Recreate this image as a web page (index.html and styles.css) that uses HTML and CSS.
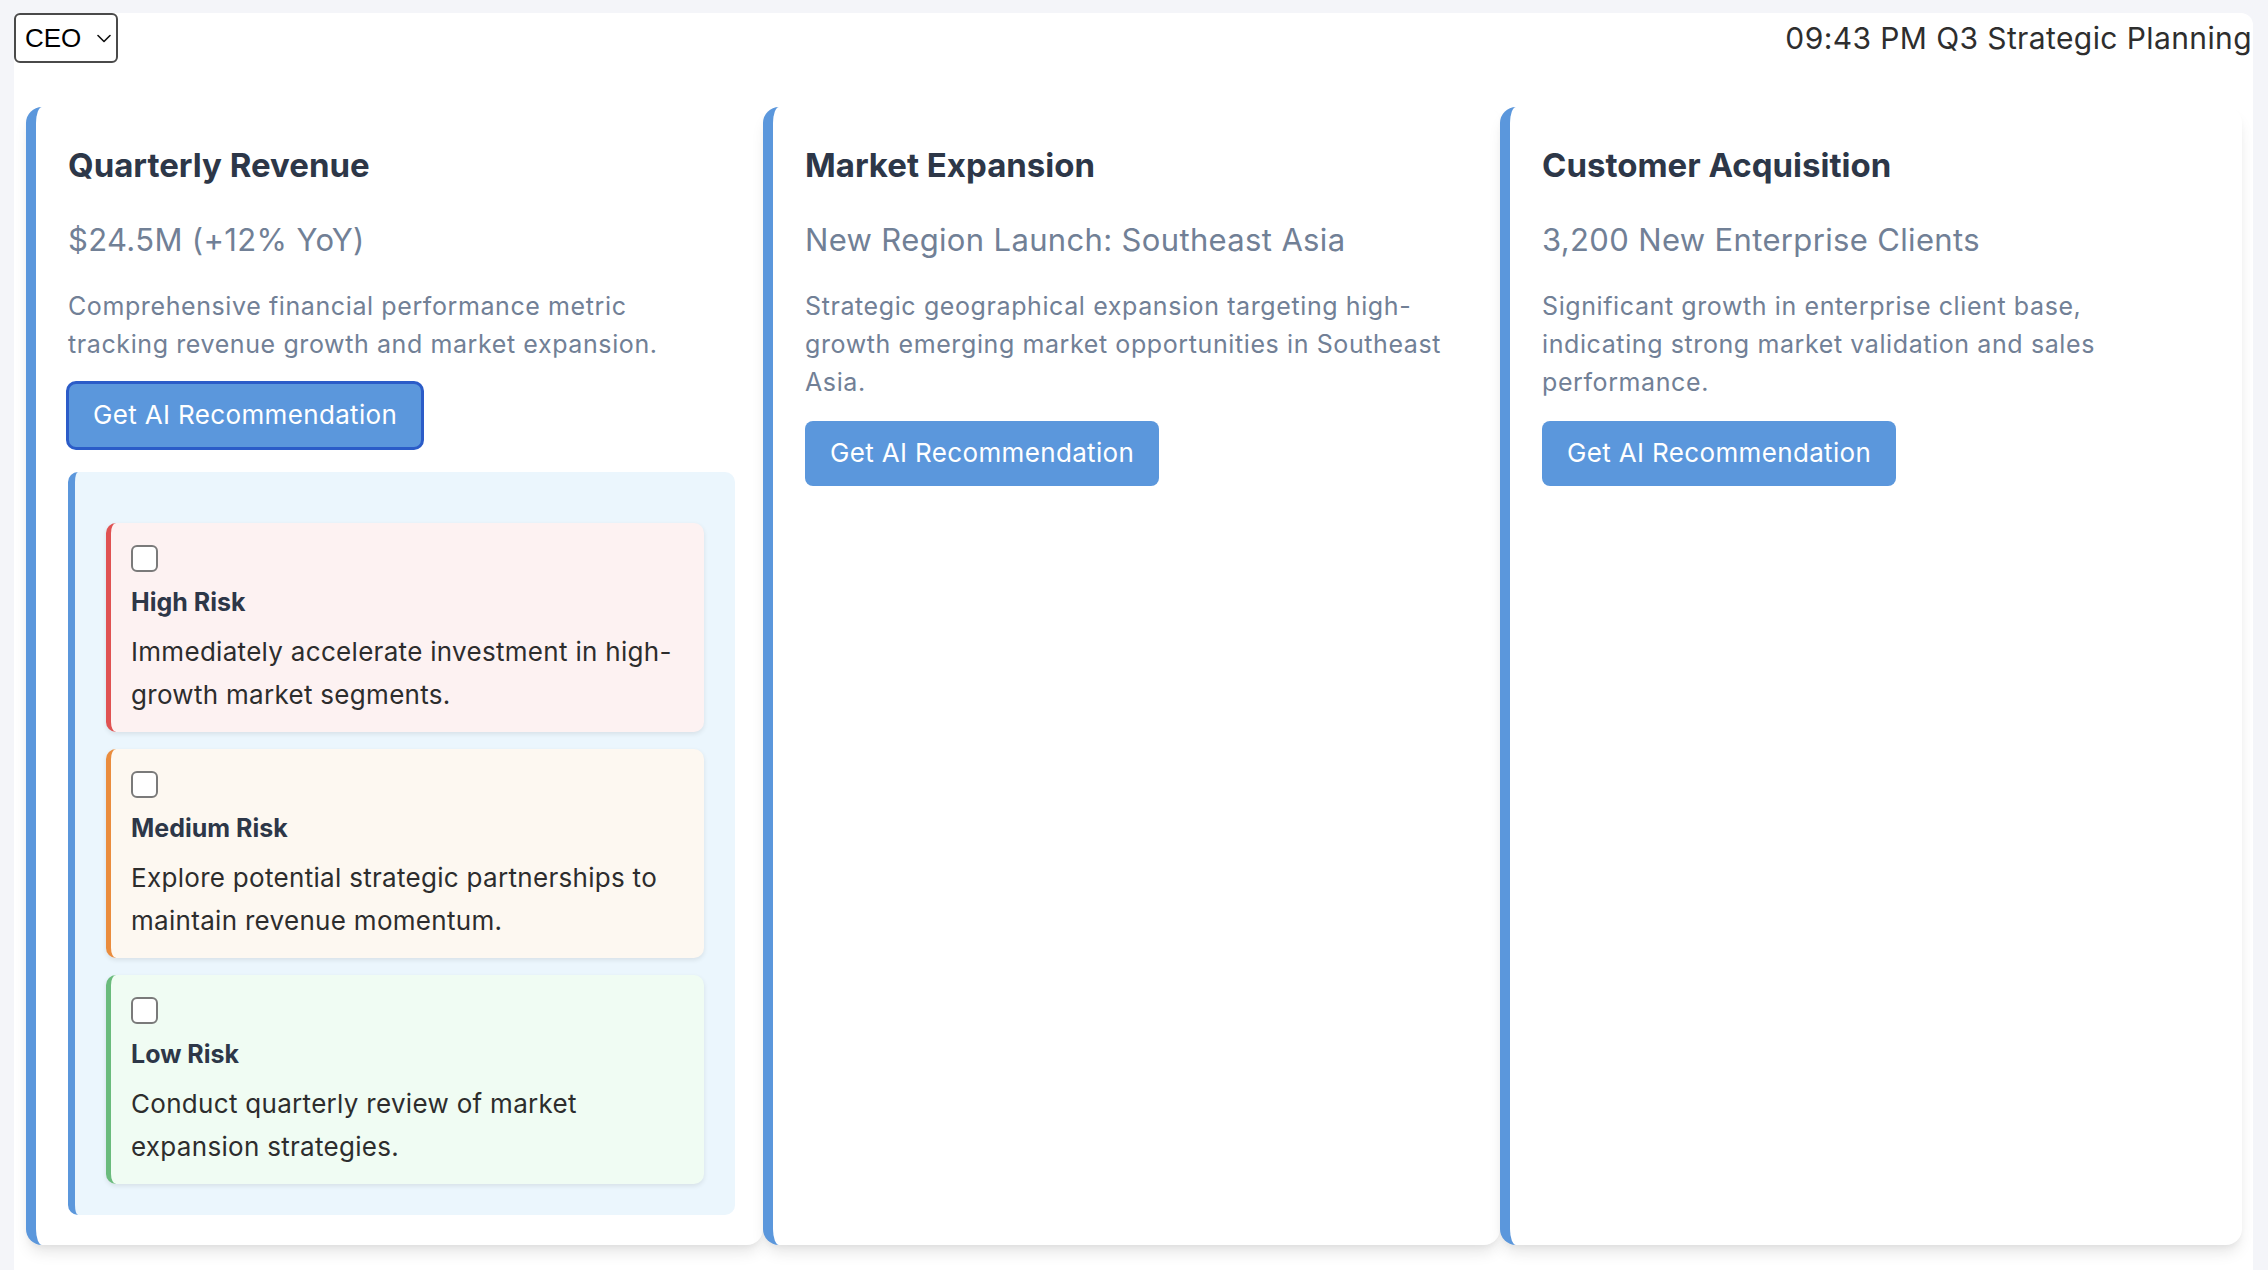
FILE: index.html
```html
<!DOCTYPE html>
<html lang="en">
<head>
<meta charset="utf-8">
<title>Q3 Strategic Planning</title>
<link rel="stylesheet" href="styles.css">
</head>
<body>
<div class="app">
  <header class="topbar">
    <div class="role-select">
      <select class="role">
        <option>CEO</option>
        <option>CFO</option>
        <option>COO</option>
      </select>
      <svg class="chev" width="14" height="9" viewBox="0 0 14 9"><path d="M1 1.5 L7 7.5 L13 1.5" fill="none" stroke="#111" stroke-width="1.6" stroke-linecap="round" stroke-linejoin="round"/></svg>
    </div>
    <div class="meta">09:43 PM Q3 Strategic Planning</div>
  </header>

  <main class="cards">
    <section class="card">
      <h2 class="card-title">Quarterly Revenue</h2>
      <div class="card-value">$24.5M (+12% YoY)</div>
      <p class="card-desc">Comprehensive financial performance metric tracking revenue growth and market expansion.</p>
      <button class="btn btn-focus">Get AI Recommendation</button>
      <div class="recs">
        <div class="rec rec-high">
          <input type="checkbox" class="check">
          <div class="rec-title">High Risk</div>
          <p class="rec-text">Immediately accelerate investment in high-growth market segments.</p>
        </div>
        <div class="rec rec-med">
          <input type="checkbox" class="check">
          <div class="rec-title">Medium Risk</div>
          <p class="rec-text">Explore potential strategic partnerships to maintain revenue momentum.</p>
        </div>
        <div class="rec rec-low">
          <input type="checkbox" class="check">
          <div class="rec-title">Low Risk</div>
          <p class="rec-text">Conduct quarterly review of market expansion strategies.</p>
        </div>
      </div>
    </section>

    <section class="card">
      <h2 class="card-title">Market Expansion</h2>
      <div class="card-value">New Region Launch: Southeast Asia</div>
      <p class="card-desc">Strategic geographical expansion targeting high-growth emerging market opportunities in Southeast Asia.</p>
      <button class="btn">Get AI Recommendation</button>
    </section>

    <section class="card">
      <h2 class="card-title">Customer Acquisition</h2>
      <div class="card-value">3,200 New Enterprise Clients</div>
      <p class="card-desc">Significant growth in enterprise client base, indicating strong market validation and sales performance.</p>
      <button class="btn">Get AI Recommendation</button>
    </section>
  </main>
</div>
</body>
</html>
```
FILE: styles.css
```css
* { box-sizing: border-box; }

html, body {
  margin: 0;
  padding: 0;
}

body {
  background: #f4f5f9;
  font-family: Inter, "Noto Sans", sans-serif;
  color: #2d3748;
  min-height: 1270px;
}

.app {
  margin: 13px 15px 0 14px;
  background: #ffffff;
  border-radius: 12px 12px 0 0;
  min-height: 1300px;
}

.topbar {
  display: flex;
  align-items: center;
  justify-content: space-between;
  height: 50px;
}

.role-select {
  position: relative;
  width: 104px;
  height: 50px;
}

.role {
  appearance: none;
  -webkit-appearance: none;
  width: 104px;
  height: 50px;
  border: 2px solid #4a4a4a;
  border-radius: 6px;
  background: #fff;
  font-family: "Liberation Sans", Arial, sans-serif;
  font-size: 26px;
  color: #000;
  padding: 0 0 0 9px;
  margin: 0;
}

.chev {
  position: absolute;
  left: 83px;
  top: 21px;
  pointer-events: none;
}

.meta {
  font-size: 30px;
  letter-spacing: 0.4px;
  color: #2e2e2e;
  padding-right: 1px;
}

.cards {
  display: grid;
  grid-template-columns: 737px 737px 1fr;
  padding: 44px 11px 0 12px;
}

.card {
  background: #fff;
  border-left: 10px solid #5b97dc;
  border-radius: 16px;
  padding: 39px 28px 30px 32px;
  box-shadow: 0 10px 15px -3px rgba(0, 0, 0, 0.1), 0 4px 6px -2px rgba(0, 0, 0, 0.05);
}

.card-title {
  margin: 0 0 38px;
  font-size: 33px;
  line-height: 38px;
  font-weight: 700;
  color: #2d3748;
}

.card-value {
  font-size: 31px;
  letter-spacing: 0.35px;
  line-height: 36px;
  color: #718096;
  margin-bottom: 29px;
}

.card-desc {
  margin: 0 0 20px;
  max-width: 652px;
  font-size: 25px;
  letter-spacing: 0.6px;
  line-height: 38px;
  color: #718096;
}

.btn {
  display: block;
  border: 0;
  background: #5b97dc;
  color: #fff;
  font-family: Inter, "Noto Sans", sans-serif;
  font-size: 26px;
  letter-spacing: 0.35px;
  line-height: 30px;
  padding: 17px 25px 18px;
  border-radius: 8px;
  cursor: pointer;
}

.btn-focus {
  outline: 3px solid #2b5cc8;
  outline-offset: -1px;
}

.recs {
  margin-top: 24px;
  background: #ebf6fd;
  border-left: 7px solid #5b97dc;
  border-radius: 10px;
  padding: 51px 31px 31px 31px;
  display: flex;
  flex-direction: column;
  gap: 17px;
}

.rec {
  border-left: 5px solid;
  border-radius: 10px;
  padding: 20px 19px 16px 20px;
  box-shadow: 0 2px 5px rgba(0, 0, 0, 0.09);
}

.rec-high { background: #fdf2f2; border-left-color: #e05252; }
.rec-med  { background: #fdf8f1; border-left-color: #ea8c3d; }
.rec-low  { background: #f0fcf3; border-left-color: #6abb7c; }

.check {
  appearance: none;
  -webkit-appearance: none;
  display: block;
  width: 27px;
  height: 27px;
  margin: 2px 0 12px;
  border: 2px solid #7a7a7a;
  border-radius: 6px;
  background: #fff;
}

.rec-title {
  font-size: 25px;
  line-height: 36px;
  font-weight: 700;
  color: #2d3748;
  margin-bottom: 10px;
}

.rec-text {
  margin: 0;
  font-size: 26px;
  letter-spacing: 0.3px;
  line-height: 43px;
  color: #2d2d2d;
}
```
